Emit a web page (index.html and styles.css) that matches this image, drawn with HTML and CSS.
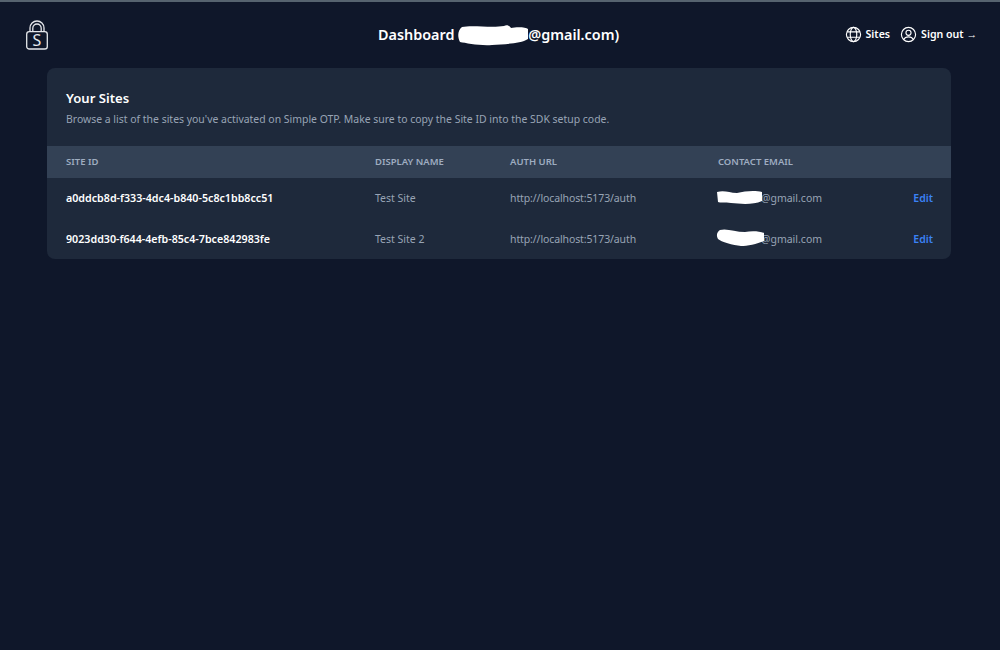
FILE: index.html
```html
<!DOCTYPE html>
<html lang="en">
<head>
<meta charset="utf-8">
<title>Dashboard</title>
<link rel="stylesheet" href="styles.css">
</head>
<body>
<div class="topline"></div>
<nav class="nav">
  <svg class="logo" viewBox="0 0 24 30" fill="none" stroke="#e5e7eb" stroke-width="1.3">
    <path d="M5 12V8a7 7 0 0 1 14 0V12"/>
    <path d="M7.8 12V8.200a4.200 4.200 0 0 1 8.400 0V12"/>
    <rect x="1.700" y="11.600" width="20.600" height="17.400" rx="2.600"/>
    <text x="12" y="26" text-anchor="middle" class="logo-s">S</text>
  </svg>
  <h1 class="nav-title">Dashboard <span class="redact-wrap"><svg class="redact-title" viewBox="0 0 70 22"><path d="M4 3C14 1 34 4 46 2 49 0 52 2 53 4 58 3 68 3 70 5V15C62 20 46 20 34 21 22 22 8 19 2 18-1 12 0 6 4 3Z"/></svg></span>@gmail.com)</h1>
  <div class="nav-links">
    <a class="nav-link">
      <svg class="nav-icon" viewBox="0 0 24 24" fill="none" stroke="currentColor" stroke-width="1.6"><circle cx="12" cy="12" r="10"/><ellipse cx="12" cy="12" rx="4.600" ry="10"/><path d="M3 8.200h18M3 15.800h18"/></svg>
      Sites
    </a>
    <a class="nav-link">
      <svg class="nav-icon" viewBox="0 0 24 24" fill="none" stroke="currentColor" stroke-width="1.6"><circle cx="12" cy="12" r="10"/><circle cx="12" cy="9.600" r="3.600"/><path d="M5.200 19.200c1.400-2.800 3.900-3.900 6.800-3.900s5.400 1.100 6.800 3.900"/></svg>
      Sign out →
    </a>
  </div>
</nav>
<main class="card">
  <header class="card-head">
    <h2 class="card-title">Your Sites</h2>
    <p class="card-sub">Browse a list of the sites you've activated on Simple OTP. Make sure to copy the Site ID into the SDK setup code.</p>
  </header>
  <table class="sites">
    <thead>
      <tr>
        <th class="c-id">Site ID</th>
        <th class="c-name">Display Name</th>
        <th class="c-url">Auth URL</th>
        <th class="c-mail">Contact Email</th>
        <th class="c-edit"></th>
      </tr>
    </thead>
    <tbody>
      <tr>
        <td class="site-id">a0ddcb8d-f333-4dc4-b840-5c8c1bb8cc51</td>
        <td>Test Site</td>
        <td class="auth-url">http://localhost:5173/auth</td>
        <td><span class="mail-wrap"><svg class="redact-mail" viewBox="0 0 45 15"><path d="M0 2C8 0 12 3 20 3 28 1 38 0 45 2V11C36 15 24 14 14 13 8 12 3 13 1 12Z"/></svg></span>@gmail.com</td>
        <td class="edit-cell"><a class="edit">Edit</a></td>
      </tr>
      <tr>
        <td class="site-id">9023dd30-f644-4efb-85c4-7bce842983fe</td>
        <td>Test Site 2</td>
        <td class="auth-url">http://localhost:5173/auth</td>
        <td><span class="mail-wrap"><svg class="redact-mail tall" viewBox="0 0 45 17"><path d="M3 1C10-1 18 3 28 3 34 2 42 2 47 4V12C40 15 30 17 24 17 16 16 4 13 1 10-1 6 0 3 3 1Z"/></svg></span>@gmail.com</td>
        <td class="edit-cell"><a class="edit">Edit</a></td>
      </tr>
    </tbody>
  </table>
</main>
</body>
</html>
```
FILE: styles.css
```css
* { box-sizing: border-box; }
html, body { margin: 0; height: 100%; }
body {
  background: #0f172a;
  color: #fff;
  font-family: "Noto Sans", "Open Sans", sans-serif;
  overflow: hidden;
}
.topline { height: 2px; background: #56636f; }
.nav {
  position: relative;
  display: flex;
  align-items: center;
  justify-content: space-between;
  height: 66px;
  padding: 0 23px 0 25px;
}
.logo { width: 24px; height: 30px; }
.logo-s { font: 400 16px "Noto Sans", sans-serif; fill: #e5e7eb; stroke: none; }
.nav-title {
  position: absolute;
  left: 378px;
  top: 22px;
  margin: 0;
  font-size: 14.4px;
  font-weight: 600;
  line-height: 22px;
  white-space: nowrap;
}
.redact-wrap { display: inline-block; width: 70px; height: 22px; vertical-align: top; }
.redact-title { width: 70px; height: 22px; fill: #fff; display: block; }
.nav-links { display: flex; gap: 10px; align-items: center; }
.nav-link {
  display: flex;
  align-items: center;
  gap: 4px;
  font-size: 10.6px;
  font-weight: 600;
  line-height: 14px;
  color: #fff;
  position: relative;
  top: -1px;
}
.nav-icon { width: 17px; height: 17px; }
.card {
  width: 904px;
  margin: 0 0 0 47px;
  background: #1e293b;
  border-radius: 8px;
  overflow: hidden;
}
.card-head { padding: 21px 19px 0; height: 78px; }
.card-title { margin: 0; font-size: 13.1px; font-weight: 600; line-height: 18px; }
.card-sub { margin: 4px 0 0; font-size: 10.45px; line-height: 16px; color: #98a4b5; white-space: nowrap; }
.sites { width: 100%; border-collapse: collapse; table-layout: fixed; }
.sites th {
  height: 32px;
  padding: 0 0 2px 19px;
  background: #334155;
  color: #9fadc1;
  font-size: 9.5px;
  font-weight: 600;
  text-align: left;
  text-transform: uppercase;
}
.c-id { width: 309px; }
.c-name { width: 135px; }
.c-url { width: 208px; }
.c-mail { width: 172px; }
.sites td {
  height: 40.5px;
  padding: 0 0 0 19px;
  font-size: 10.5px;
  color: #98a4b5;
  white-space: nowrap;
}
.sites .auth-url { letter-spacing: -0.11px; }
.sites .site-id { color: #fff; font-weight: 600; font-size: 10.7px; }
.sites .edit-cell { text-align: right; padding: 0 18px 0 0; }
.edit { color: #3b82f6; font-weight: 600; }
.mail-wrap { display: inline-block; width: 43px; height: 10px; position: relative; }
.redact-mail { position: absolute; left: -1px; top: -2px; width: 45px; height: 15px; fill: #fff; overflow: visible; }
.redact-mail.tall { top: -4px; left: -2px; height: 17px; width: 47px; }
```
